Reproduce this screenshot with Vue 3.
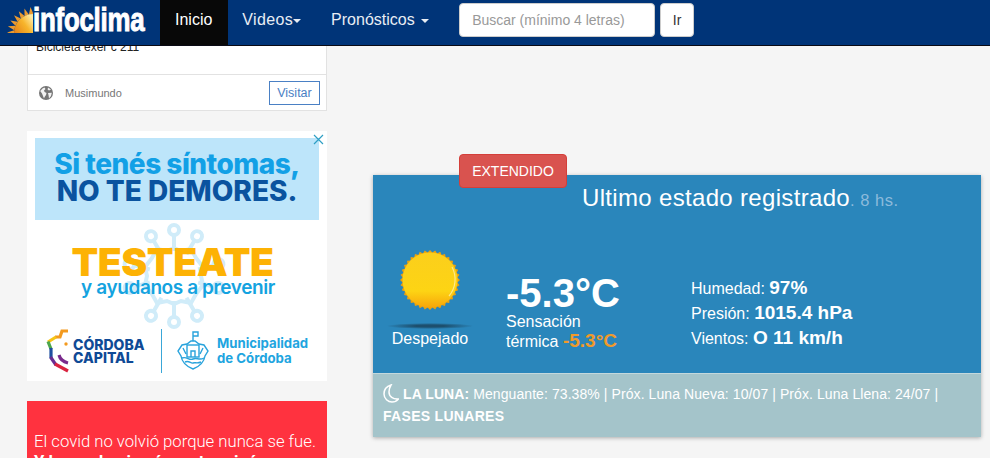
<script setup>
const sunPoints = (() => {
  const pts = []
  const n = 36
  for (let i = 0; i < n * 2; i++) {
    const r = i % 2 ? 27.5 : 30
    const a = (Math.PI * i) / n
    pts.push(`${(30 + r * Math.cos(a)).toFixed(2)},${(30 + r * Math.sin(a)).toFixed(2)}`)
  }
  return pts.join(' ')
})()

const virusArms = [0, 30, 75, 105, 150, 180, 210, 255, 285, 330]

const rays = (() => {
  const out = []
  for (let i = 0; i < 7; i++) {
    const a = Math.PI + ((i + 0.1) * Math.PI) / 13
    const c = Math.cos(a), s = Math.sin(a)
    const c1 = Math.cos(a - 0.12), s1 = Math.sin(a - 0.12)
    const c2 = Math.cos(a + 0.12), s2 = Math.sin(a + 0.12)
    out.push(`${(26 + 19 * c1).toFixed(1)},${(26 + 19 * s1).toFixed(1)} ${(26 + 26 * c).toFixed(1)},${(26 + 26 * s).toFixed(1)} ${(26 + 19 * c2).toFixed(1)},${(26 + 19 * s2).toFixed(1)}`)
  }
  return out
})()
</script>

<template>
  <div class="page">
    <header class="navbar">
      <a class="brand">
        <svg class="brand-sun" width="26" height="26" viewBox="0 0 26 26">
          <defs>
            <linearGradient id="bs" x1="0" y1="1" x2="1" y2="0.3">
              <stop offset="0" stop-color="#e47f16" />
              <stop offset="0.6" stop-color="#f7b52c" />
              <stop offset="1" stop-color="#ffe9a0" />
            </linearGradient>
          </defs>
          <polygon v-for="r in rays" :key="r" :points="r" fill="#ea9a30" />
          <path d="M7 26 A19 19 0 0 1 26 7 V26 Z" fill="url(#bs)" />
        </svg>
        <span class="brand-text">infoclima</span>
      </a>
      <nav class="nav">
        <a class="nav-item active">Inicio</a>
        <a class="nav-item videos">Videos<i class="caret"></i></a>
        <a class="nav-item prono">Pronósticos <i class="caret spaced"></i></a>
      </nav>
      <form class="search" @submit.prevent>
        <input class="search-input" type="text" placeholder="Buscar (mínimo 4 letras)" />
        <button class="search-btn">Ir</button>
      </form>
    </header>

    <div class="layout">
      <aside class="side">
        <section class="ad-card">
          <p class="ad-title">Bicicleta exer c 211</p>
          <div class="ad-foot">
            <svg class="globe" width="14" height="14" viewBox="0 0 14 14">
              <circle cx="7" cy="7" r="7" fill="#757575" />
              <path d="M1.2 5 L3.5 2.6 L5.5 1.6 L6.5 3 L5 4.5 L5.6 6 L7.5 7 L7 9 L5.6 11 L5 12.6 L3.8 9.5 L3 7.5 Z M9 1.4 L12 3.4 L10 4.6 L8.6 3.4 Z M9 7 L12.8 6.8 L12 10 L10 12.4 L9.6 9.5 Z" fill="#fff" opacity="0.9" />
            </svg>
            <span class="ad-name">Musimundo</span>
            <a class="ad-visit">Visitar</a>
          </div>
        </section>

        <section class="ad-covid">
          <svg class="ad-close" width="11" height="11" viewBox="0 0 11 11">
            <path d="M1 1 L10 10 M10 1 L1 10" stroke="#2f9fc4" stroke-width="1.2" fill="none" />
          </svg>
          <div class="banner">
            <div class="banner-a">Si tenés síntomas,</div>
            <div class="banner-b">NO TE DEMORES.</div>
          </div>
          <div class="test-block">
            <svg class="virus" width="106" height="106" viewBox="0 0 106 106">
              <g fill="none" stroke="#d0ecf9" stroke-width="4">
                <path d="M53 25 L60 28 L70 26 L75 35 L82 44 L80 53 L82 62 L75 71 L70 80 L60 78 L53 81 L46 78 L36 80 L31 71 L24 62 L26 53 L24 44 L31 35 L36 26 L46 28 Z" />
                <g v-for="a in virusArms" :key="a" :transform="`rotate(${a} 53 53)`">
                  <path d="M53 28 V12" />
                  <circle cx="53" cy="7" r="5" />
                </g>
              </g>
            </svg>
            <div class="test-title">TESTEATE</div>
            <div class="test-sub">y ayudanos a prevenir</div>
          </div>
          <div class="logos">
            <svg class="cba-mark" width="24" height="44" viewBox="0 0 24 44">
              <g fill="none" stroke-width="3.2">
                <path d="M22 2 H16 L14 8 H9" stroke="#f39a1f" />
                <path d="M10 8 L2 13" stroke="#f5c518" />
                <path d="M2 12.5 L5 20" stroke="#4ca64c" />
                <path d="M5 19 L5 29" stroke="#1e4fa0" />
                <path d="M4.5 28 L10 36" stroke="#6a2c91" />
                <path d="M9 35 L22 42" stroke="#d9233f" />
                <path d="M13 26 C14 30 18 33 22 34" stroke="#7a2a8c" />
              </g>
              <circle cx="20" cy="15" r="1.7" fill="#f39a1f" />
            </svg>
            <div class="cba-text">CÓRDOBA<br />CAPITAL</div>
            <span class="logo-rule"></span>
            <svg class="muni-mark" width="32" height="40" viewBox="0 0 32 40">
              <g fill="none" stroke="#29a3dc" stroke-width="1.4">
                <path d="M16 38 C8 35 5 31 4 25 L1 20 L5 14 L10 13 L14 10 H18 L22 13 L27 14 L31 20 L28 25 C27 31 24 35 16 38 Z" />
                <path d="M16 10 V1 H21 V5 H16" />
                <rect x="10" y="14" width="12" height="12" />
                <path d="M14 26 V20 H18 V26 M5 27 C10 25 12 30 16 28 C20 26 22 30 27 27 M8 31 C12 29 14 33 16 32 C18 31 20 33 24 31 M6 17 L9 23 M26 17 L23 23" />
              </g>
            </svg>
            <div class="muni-text">Municipalidad<br />de Córdoba</div>
          </div>
        </section>

        <section class="ad-red">
          <p class="red-a">El covid no volvió porque nunca se fue.</p>
          <p class="red-b">Y la pandemia aún no terminó.</p>
        </section>
      </aside>

      <main class="main">
        <a class="extend">EXTENDIDO</a>
        <section class="panel">
          <div class="panel-body">
            <h2 class="panel-title">Ultimo estado registrado<small class="ago">. 8 hs.</small></h2>
            <div class="now">
              <div class="sky">
                <svg class="sun" width="60" height="60" viewBox="0 0 60 60">
                  <defs>
                    <linearGradient id="sunFill" x1="0" y1="0" x2="0" y2="1">
                      <stop offset="0" stop-color="#fbcf1c" />
                      <stop offset="0.7" stop-color="#fdd414" />
                      <stop offset="1" stop-color="#f8a60a" />
                    </linearGradient>
                  </defs>
                  <polygon :points="sunPoints" fill="#eda30c" />
                  <circle cx="30" cy="30" r="27.5" fill="url(#sunFill)" />
                  <path d="M52 17 A26 26 0 0 1 49 46" fill="none" stroke="#ffe98a" stroke-width="1.2" />
                </svg>
                <span class="sun-shadow"></span>
                <span class="sky-label">Despejado</span>
              </div>
              <div class="temps">
                <div class="temp">-5.3°C</div>
                <div class="feels">Sensación<br />térmica <b class="feels-val">-5.3°C</b></div>
              </div>
              <ul class="stats">
                <li>Humedad: <b>97%</b></li>
                <li>Presión: <b>1015.4 hPa</b></li>
                <li>Vientos: <b>O 11 km/h</b></li>
              </ul>
            </div>
          </div>
          <div class="panel-foot">
            <svg class="moon" width="16" height="19" viewBox="0 0 16 19">
              <path d="M8 1 C3 2.5 1 6 1 10 C1 14.5 5 18 9 18 C11.5 18 14 16.8 15.5 15 C10 15.5 6 12.5 6 8 C6 5.5 6.8 3 8 1 Z" fill="none" stroke="#fff" stroke-width="1.5" />
            </svg>
            <b>LA LUNA:</b> Menguante: 73.38% | Próx. Luna Nueva: 10/07 | Próx. Luna Llena: 24/07 |
            <a class="fases">FASES LUNARES</a>
          </div>
        </section>
      </main>
    </div>
  </div>
</template>

<style>
html, body { margin: 0; background: #f5f5f5; }
</style>

<style scoped>
.page {
  position: relative;
  height: 458px;
  overflow: hidden;
  background: #f5f5f5;
  font-family: "Liberation Sans", Arial, sans-serif;
  font-size: 14px;
  color: #333;
}

/* navbar */
.navbar {
  position: absolute;
  top: 0; left: 0; right: 0;
  z-index: 5;
  height: 45px;
  display: flex;
  background: #003478;
  border-bottom: 1px solid #0a0a14;
}
.brand {
  width: 160px;
  display: flex;
  align-items: flex-start;
  box-sizing: border-box;
  padding: 0 0 0 7px;
  overflow: hidden;
}
.brand-sun { margin-top: 7px; flex: none; }
.brand-text {
  font-weight: 700;
  font-size: 34px;
  line-height: 39px;
  color: #fff;
  letter-spacing: -0.3px;
  transform: scaleX(0.76);
  transform-origin: left center;
  -webkit-text-stroke: 1px #fff;
}
.nav { display: flex; height: 45px; }
.nav-item {
  color: #e8edf4;
  font-size: 16px;
  line-height: 40px;
  height: 45px;
  padding: 0 15px;
  box-sizing: border-box;
}
.nav-item.active { background: #080808; color: #fff; padding-right: 16px; }
.nav-item.videos { padding: 0 15px 0 14px; letter-spacing: 0.35px; }
.nav-item.prono { padding: 0 30px 0 15px; }
.caret {
  display: inline-block;
  width: 0; height: 0;
  vertical-align: middle;
  border-top: 4px solid #e8edf4;
  border-left: 4px solid transparent;
  border-right: 4px solid transparent;
}
.caret.spaced { margin-left: 2px; }
.search { display: flex; gap: 5px; padding-top: 3px; }
.search-input {
  width: 196px;
  height: 34px;
  box-sizing: border-box;
  border: 1px solid #ccc;
  border-radius: 4px;
  padding: 6px 12px;
  font: 14px "Liberation Sans", sans-serif;
  color: #555;
  background: #fff;
  outline: none;
}
.search-input::placeholder { color: #999; opacity: 1; }
.search-btn {
  width: 34px;
  height: 34px;
  border: 1px solid #ccc;
  border-radius: 4px;
  background: #fff;
  color: #333;
  font: 14px "Liberation Sans", sans-serif;
  padding: 0;
}

/* layout */
.layout { display: flex; }
.side { width: 300px; margin-left: 27px; flex: none; display: flex; flex-direction: column; gap: 20px; }
.main { margin-left: 46px; width: 608px; flex: none; padding-top: 154px; display: flex; flex-direction: column; align-items: flex-start; }

/* ad 1 */
.ad-card {
  height: 111px;
  box-sizing: border-box;
  background: #fff;
  border: 1px solid #e2e2e2;
  border-top: 0;
  display: flex;
  flex-direction: column;
  justify-content: flex-end;
}
.ad-title {
  margin: 0 0 21px 8px;
  font-size: 12px;
  line-height: 12px;
  color: #222;
}
.ad-foot {
  height: 36px;
  box-sizing: border-box;
  border-top: 1px solid #e2e2e2;
  display: flex;
  align-items: center;
  padding: 0 6px 0 11px;
}
.globe { flex: none; }
.ad-name { margin-left: 12px; font-size: 11px; color: #777; flex: 1; }
.ad-visit {
  width: 51px;
  height: 24px;
  box-sizing: border-box;
  border: 1px solid #4a80c4;
  color: #4a80c4;
  font-size: 12.5px;
  line-height: 22px;
  text-align: center;
}

/* ad 2 */
.ad-covid {
  position: relative;
  height: 250px;
  background: #fff;
  padding: 7px 8px 0;
  box-sizing: border-box;
}
.ad-close { position: absolute; top: 3px; right: 3px; }
.banner {
  height: 82px;
  background: #bde5fa;
  text-align: center;
  font-family: Inter, "Liberation Sans", sans-serif;
  font-weight: 800;
  box-sizing: border-box;
  padding-top: 13px;
  white-space: nowrap;
}
.banner-a { font-size: 28px; line-height: 27px; color: #12a0e6; letter-spacing: -0.5px; }
.banner-b { font-size: 28px; line-height: 27px; color: #0a539f; }
.test-block { position: relative; height: 106px; margin-top: 3px; text-align: center; }
.virus { position: absolute; left: 86px; top: 0; }
.test-title {
  position: relative;
  padding: 19px 9px 0 0;
  font-family: Inter, "Liberation Sans", sans-serif;
  font-weight: 900;
  font-size: 39px;
  line-height: 40px;
  color: #fdb204;
  letter-spacing: -0.4px;
}
.test-sub {
  position: relative;
  margin-top: -4px;
  padding-left: 2px;
  font-family: Inter, "Liberation Sans", sans-serif;
  font-weight: 600;
  font-size: 19px;
  line-height: 20px;
  color: #14a3e0;
  letter-spacing: -0.4px;
  white-space: nowrap;
}
.logos { display: flex; align-items: center; height: 44px; padding-left: 11px; }
.cba-mark { flex: none; }
.cba-text {
  margin-left: 3px;
  flex: none;
  width: 72px;
  font-family: Inter, "Liberation Sans", sans-serif;
  font-weight: 800;
  font-size: 14px;
  line-height: 13px;
  color: #0f4a96;
  white-space: nowrap;
}
.logo-rule { width: 1px; height: 44px; background: #3aa7d8; margin: 0 15px 0 16px; flex: none; }
.muni-mark { flex: none; }
.muni-text {
  margin-left: 8px;
  font-family: Inter, "Liberation Sans", sans-serif;
  font-weight: 700;
  font-size: 13.2px;
  line-height: 15px;
  color: #1ea5e0;
  white-space: nowrap;
}

/* ad 3 */
.ad-red {
  height: 120px;
  background: #ff323f;
  color: #fff;
  padding: 31px 7px 0;
  box-sizing: border-box;
  font-family: "Roboto", "Liberation Sans", sans-serif;
}
.red-a { margin: 0; font-size: 16.7px; line-height: 20px; font-weight: 300; white-space: nowrap; }
.red-b { margin: 0; font-size: 16.7px; line-height: 20px; font-weight: 700; white-space: nowrap; }

/* panel */
.extend {
  position: relative;
  z-index: 1;
  margin: 0 0 -13px 86px;
  width: 108px;
  height: 34px;
  box-sizing: border-box;
  background: #d9534f;
  border: 1px solid #d43f3a;
  border-radius: 4px;
  color: #fff;
  font-size: 14px;
  line-height: 32px;
  text-align: center;
}
.panel {
  width: 608px;
  box-shadow: 0 1px 4px rgba(0, 0, 0, 0.3);
}
.panel-body {
  height: 198px;
  box-sizing: border-box;
  background: #2a86bb;
  color: #fff;
}
.panel-title {
  margin: 0;
  padding: 9px 0 0 209px;
  font-weight: 400;
  font-size: 24px;
  line-height: 28px;
  letter-spacing: 0.33px;
  color: #fff;
}
.ago { font-size: 16.5px; color: #8dbbdc; letter-spacing: 0.5px; }
.now { display: flex; align-items: flex-start; margin-top: 36px; }
.sky {
  width: 114px;
  display: flex;
  flex-direction: column;
  align-items: center;
}
.sun { display: block; }
.sun-shadow {
  width: 86px;
  height: 6px;
  margin-top: 13px;
  border-radius: 50%;
  background: radial-gradient(ellipse at center, #1d4f6d 25%, rgba(42, 134, 187, 0) 72%);
}
.sky-label { font-size: 16px; line-height: 20px; }
.temps { margin-left: 19px; width: 185px; padding-top: 24px; }
.temp { font-size: 40px; font-weight: 700; line-height: 38px; }
.feels { font-size: 16px; line-height: 19px; }
.feels-val { color: #f09a2a; font-size: 19px; line-height: 19px; }
.stats {
  list-style: none;
  margin: 0;
  padding: 26px 0 0 0;
  font-size: 16px;
  line-height: 24px;
}
.stats b { font-size: 19px; }
.panel-foot {
  height: 64px;
  box-sizing: border-box;
  background: #a4c4ca;
  border-top: 1px solid #c3d8dc;
  padding: 9px 10px 0;
  color: #fff;
  font-size: 14px;
  line-height: 22px;
  letter-spacing: 0.08px;
}
.moon { vertical-align: -4px; margin-right: 4px; }
.fases { display: block; font-weight: 700; letter-spacing: 0.3px; }
</style>
